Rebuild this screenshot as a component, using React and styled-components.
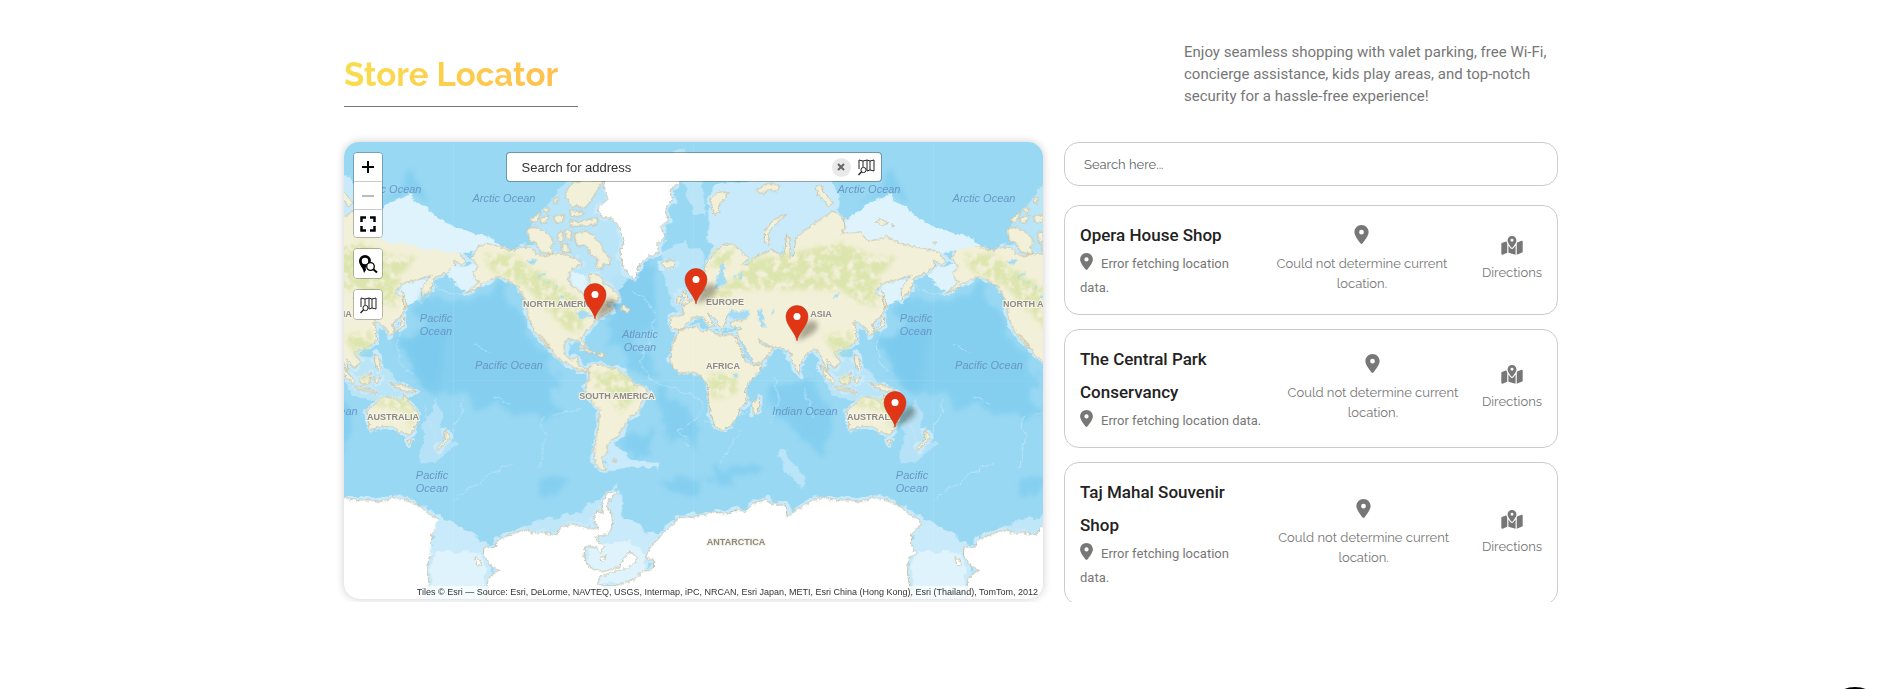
import styled, { createGlobalStyle } from 'styled-components';
import { FaLocationDot, FaMapLocationDot } from 'react-icons/fa6';

const stores = [
  { id: 1, name: 'Opera House Shop' },
  { id: 2, name: 'The Central Park Conservancy' },
  { id: 3, name: 'Taj Mahal Souvenir Shop' },
];

const pins = [
  { id: 'new-york', x: 251, y: 177 },
  { id: 'london', x: 352, y: 162 },
  { id: 'agra', x: 453, y: 199 },
  { id: 'sydney', x: 551, y: 285 },
];

const oceanLabels = [
  [46, 51, ['Arctic Ocean']],
  [160, 60, ['Arctic Ocean']],
  [525, 51, ['Arctic Ocean']],
  [640, 60, ['Arctic Ocean']],
  [92, 180, ['Pacific', 'Ocean']],
  [572, 180, ['Pacific', 'Ocean']],
  [165, 227, ['Pacific Ocean']],
  [645, 227, ['Pacific Ocean']],
  [296, 196, ['Atlantic', 'Ocean']],
  [461, 273, ['Indian Ocean']],
  [-19, 273, ['Indian Ocean']],
  [88, 337, ['Pacific', 'Ocean']],
  [568, 337, ['Pacific', 'Ocean']],
];

const landLabels = [
  [217, 165, 'NORTH AMERICA'],
  [697, 165, 'NORTH AMERICA'],
  [273, 257, 'SOUTH AMERICA'],
  [381, 163, 'EUROPE'],
  [-3, 175, 'ASIA'],
  [477, 175, 'ASIA'],
  [379, 227, 'AFRICA'],
  [49, 278, 'AUSTRALIA'],
  [529, 278, 'AUSTRALIA'],
  [392, 403, 'ANTARCTICA'],
];

const northAmerica =
  'M395 385L415 350L440 340L480 350L515 362L545 352L570 350L585 368L605 378L640 372L665 372L690 380L712 388L728 402L708 412L692 422L684 445L695 470L722 484L742 508L750 480L748 432L780 435L790 458L808 468L838 495L835 512L800 515L815 540L790 556L768 570L745 600L722 622L738 652L730 654L716 630L680 628L672 650L675 675L692 690L712 680L715 704L722 712L752 720L746 726L715 720L690 706L655 685L640 670L622 640L598 612L630 656L620 650L586 606L562 560L562 525L545 490L530 465L500 450L480 440L455 446L430 462L400 480L375 490L420 455L405 450L400 430L415 410Z';
const southAmerica =
  'M745 715L762 702L775 702L800 712L830 715L850 735L875 750L880 765L915 772L922 785L905 815L895 845L870 860L855 885L840 905L830 925L815 930L800 945L802 965L785 985L790 1005L797 1020L780 1018L765 1000L762 970L768 930L775 885L780 840L760 820L742 790L735 770L748 745Z';
const arcticIslands =
  'M562 296L585 290L606 300L630 318L642 340L630 352L640 372L600 366L590 340L570 335ZM572 268L600 246L596 265L580 280ZM600 262L628 256L618 278L602 280ZM640 206L655 205L650 222L642 220ZM612 232L628 236L622 248L612 244ZM640 258L672 255L668 276L648 280ZM652 312L668 302L670 330L658 340ZM662 345L684 340L690 366L668 368ZM674 300L696 306L694 330L680 326ZM704 310L735 303L760 316L780 340L792 366L812 388L806 408L790 400L786 420L765 408L775 388L750 372L740 346L718 350L705 338ZM690 272L720 275L770 262L772 284L720 288L692 290ZM676 200L682 176L700 158L740 148L790 150L772 180L752 214L730 236L712 226L698 232ZM690 240L730 246L725 260L692 258ZM846 524L870 540L862 546L842 540ZM715 655L742 656L772 670L765 674L735 662ZM775 668L798 676L785 682L772 678ZM818 988L830 990L822 996Z';
const greenland =
  'M805 130L860 112L960 108L1030 124L1015 160L990 180L995 210L975 240L985 270L962 290L975 320L950 345L958 368L925 380L900 400L892 425L885 446L868 436L850 410L840 370L852 330L836 290L815 265L785 262L772 235L806 206L790 165Z';
const eurasia =
  'M25 495L45 480L30 470L40 440L50 400L75 365L100 345L125 342L150 360L175 385L155 405L175 404L190 385L240 360L265 370L278 392L286 350L290 312L300 330L300 386L310 370L316 340L315 325L360 290L400 262L430 243L462 265L465 295L455 310L510 305L535 335L590 320L620 335L650 345L700 355L745 365L768 395L755 405L730 390L735 410L705 430L670 445L662 480L634 512L634 478L664 436L620 450L590 456L565 470L555 490L580 500L585 540L560 570L546 582L556 602L540 616L527 596L500 575L486 580L500 590L496 610L500 625L490 642L460 655L440 662L430 670L452 696L434 716L420 700L410 690L415 730L432 750L420 745L404 705L390 672L375 655L350 670L332 700L328 734L310 700L300 665L270 652L235 648L205 625L216 645L250 655L222 690L190 704L165 650L140 615L152 592L120 592L120 575L170 570L165 560L130 550L112 558L104 584L95 600L80 570L55 550L60 565L76 588L62 592L35 560L10 562L-12 584L-24 600L-58 595L-60 560L-20 556L-22 532L0 514Z';
const africa =
  'M-30 600L20 588L36 606L60 600L90 615L130 612L145 640L165 690L190 708L218 700L210 722L175 760L165 780L172 815L150 835L145 855L120 890L95 900L75 890L60 845L54 800L56 770L44 750L25 732L0 726L-30 730L-50 712L-58 690L-55 660L-50 635Z';
const easternIslands =
  'M210 802L204 845L190 855L188 820ZM470 840L500 820L520 800L555 805L572 820L582 794L598 820L625 850L622 880L600 915L570 905L550 890L510 890L480 900ZM590 930L606 932L598 946ZM705 898L722 922L706 938L684 962L680 954L704 928ZM535 756L556 766L575 762L620 785L600 788L560 775ZM445 748L466 742L482 728L480 760L456 766ZM388 700L410 726L434 752L432 762L408 744ZM436 768L500 785L498 790L440 776ZM490 745L512 742L500 762ZM494 672L504 680L514 714L506 722L494 696ZM574 560L584 562L582 590L560 600L548 606L556 596L572 584ZM576 486L582 490L590 530L582 526ZM270 258L288 254L256 286L236 306L238 346L222 334L224 304L244 276ZM58 206L86 186L116 188L108 204L86 222L90 246L72 252L66 228ZM196 180L236 160L270 166L262 184L236 180L222 192ZM378 170L392 164L404 190L430 220L416 230L396 206L384 196ZM554 274L576 266L594 280L578 286ZM602 282L614 284L606 290ZM728 338L738 336L734 344ZM-24 484L-14 484L0 520L-26 524L-16 508ZM-38 500L-26 500L-30 520L-40 518ZM-86 398L-62 390L-45 398L-52 414L-76 416Z';
const inlandWater =
  'M94 400L104 402L100 430L112 460L90 470L76 478L78 452L88 430ZM110 556L126 538L148 546L172 540L182 556L160 568L132 566ZM198 545L216 538L222 560L218 574L230 590L212 592L208 568ZM244 544L254 540L250 552ZM428 504L450 482L446 494L434 508ZM126 734L140 730L148 740L134 744ZM150 432L158 426L156 444L148 446ZM130 440L140 434L138 446ZM146 628L158 640L190 696L180 690L156 654Z';
const lakes =
  'M560 396L576 386L592 388L582 404ZM592 440L620 424L616 432L598 444ZM612 462L630 452L626 460ZM656 500L666 494L674 506ZM710 545L730 540L746 552L762 560L738 562L722 568ZM640 474L654 466L650 474Z';
const antarctica =
  'M440 1430L442 1356L456 1334L478 1322L450 1304L430 1276L432 1252L465 1250L470 1232L520 1210L560 1200L580 1210L606 1206L650 1216L660 1192L700 1182L740 1195L776 1195L760 1170L772 1140L790 1150L786 1120L800 1090L832 1082L804 1116L800 1130L815 1150L818 1190L800 1215L764 1220L790 1250L782 1268L764 1250L735 1250L732 1280L745 1310L790 1325L840 1310L846 1290L870 1264L888 1280L888 1296L862 1314L812 1328L780 1340L774 1356L782 1368L830 1368L880 1348L910 1325L940 1318L942 1292L916 1284L930 1254L960 1220L985 1194L1020 1162L1060 1160L1120 1148L1160 1150L1195 1140L1215 1145L1240 1120L1280 1108L1295 1122L1335 1125L1342 1160L1370 1140L1410 1115L1450 1102L1490 1110L1530 1110L1560 1115L1600 1103L1640 1110L1690 1135L1712 1155L1740 1170L1740 1185L1715 1210L1715 1250L1730 1270L1706 1284L1702 1330L1710 1370L1710 1430Z';

const SearchMapIcon = () => (
  <svg width='18' height='18' viewBox='0 0 18 18' fill='none' stroke='#222' strokeWidth='1'>
    <path d='M2 11V2l4 1 4-1 3 1 4-1v11l-4-1-3 1M6 3v6M10 2v11M13 3v9' />
    <circle cx='6.5' cy='12' r='2.6' fill='#fff' />
    <path d='M4.6 13.8L1.5 17' strokeWidth='1.4' />
  </svg>
);

const PinSearchIcon = () => (
  <svg width='20' height='20' viewBox='0 0 20 20'>
    <path
      fillRule='evenodd'
      d='M7 1a6 6 0 0 0-6 6c0 4 4 6.5 5 12l2-3A6 6 0 0 1 12 8.500L13 7a6 6 0 0 0-6-6zm0 2.800a3.200 3.200 0 1 1 0 6.400a3.200 3.200 0 0 1 0-6.400z'
    />
    <circle cx='12.5' cy='12.5' r='3.8' fill='#fff' stroke='#000' strokeWidth='1.3' />
    <path d='M15.300 15.300L19 18.500' stroke='#000' strokeWidth='2' />
  </svg>
);

const Pin = ({ x, y }) => (
  <g transform={`translate(${x} ${y})`}>
    <path d='M0 0L5-14Q14-24 20-18Q24-9 0 0Z' fill='#3d3728' opacity='.4' filter='url(#soft)' />
    <path
      d='M0 0C-1-8-11-15-11-24.500A10.800 10.800 0 0 1 11-24.500C11-15 1-8 0 0Z'
      fill='#e03616'
      stroke='#b92d12'
      strokeWidth='.5'
    />
    <circle cy='-24.5' r='3.5' fill='#fff' />
  </g>
);

const World = () => (
  <g id='world'>
    {/* deep basins */}
    <g filter='url(#basin)' fill='#78c9ee' opacity='.6'>
      <path d='M270 490L400 500L490 460L560 600L660 730L640 860L420 830L230 760L190 650Z' />
      <path d='M820 440L940 400L960 560L900 640L960 760L900 740L800 640L820 600Z' />
      <path d='M850 910L930 900L930 970L850 970ZM960 780L1050 860L1080 960L980 930Z' />
      <path d='M590 1040L680 1030L660 1090L600 1080ZM960 1060L1100 1030L1080 1100L980 1100Z' />
      <path d='M1290 760L1400 750L1480 860L1440 980L1330 880ZM1120 1010L1270 1020L1230 1060L1120 1060Z' />
      <path d='M1620 640L1740 600L1760 760L1680 760ZM1560 230L1640 190L1700 200L1650 120Z' />
    </g>
    <g filter='url(#blur)'>
      {/* continental shelves */}
      <g fill='none' stroke='#c9eafa' strokeWidth='16' strokeLinejoin='round'>
        <path d={northAmerica} />
        <path d={southAmerica} />
        <path d={greenland} />
        <path d={antarctica} />
        <g transform='translate(1050 0)'>
          <path d={eurasia} />
          <path d={africa} strokeWidth='10' />
          <path d={easternIslands} />
        </g>
      </g>
      <g fill='#c9eafa'>
        <path d='M560 300L680 150L840 130L880 420L800 560L700 500L600 400Z' opacity='.7' />
        <path d='M1100 330L1120 160L1280 150L1460 130L1500 200L1480 320L1320 360L1200 400Z' />
        <path d='M960 370L1040 330L1090 370L1080 500L1010 560L980 480ZM1000 60L1070 70L1100 260L1060 250L1030 150Z' opacity='.7' />
        <path d='M1430 700L1540 680L1640 770L1620 820L1480 800Z' opacity='.7' />
        <path d='M800 920L870 980L960 1005L960 1015L840 1012L800 1020Z' />
        <path d='M1690 890L1730 800L1750 900L1790 945L1720 1000L1680 1000Z' opacity='.6' />
        <path d='M300 1160L360 1190L440 1240L460 1440L260 1440L270 1250ZM830 1060L850 1160L940 1210L960 1220L900 1370L740 1370L730 1220Z' />
        <path d='M460 1240L560 1180L700 1150L780 1110L800 1220L660 1220Z' opacity='.8' />
        <path d='M1310 960L1340 960L1350 990L1400 1040L1390 1080L1340 1030Z' opacity='.7' />
      </g>
      <g fill='#def3fc'>
        <path d='M1480 300L1560 240L1640 200L1690 230L1740 270L1830 310L1920 345L1800 370L1720 360L1560 340Z' />
        <path d='M40 300L120 240L200 196L250 225L300 270L390 305L500 350L420 360L340 370L120 330Z' />
        <path d='M320 420L400 400L460 440L400 490L340 460ZM1640 450L1700 440L1690 500L1630 540L1600 500Z' />
        <path d='M280 1260L430 1270L440 1440L262 1440ZM740 1250L870 1230L920 1280L900 1360L760 1360Z' />
        <path d='M684 420L740 440L748 500L700 480Z' />
      </g>
      <g fill='none' stroke='#bfe6f8' strokeWidth='3' opacity='.8'>
        <path d='M270 450Q320 510 420 480M190 600Q150 680 220 740M880 480Q980 540 920 640T1010 780T1020 900L1050 950' />
        <path d='M1300 740Q1330 820 1290 880M600 1010Q620 900 610 850M340 1110Q420 1050 520 1000M250 830L300 960M370 815L340 910' />
        <path d='M400 640L450 670M640 850L720 845M460 800L520 830M1200 900L1140 1010M1390 780L1420 870M1090 880L1260 830' />
      </g>
    </g>

    <g filter='url(#coast)' stroke='#c8c3a8' strokeWidth='3' strokeLinejoin='round'>
      <g fill='#f3f0d9'>
        <path d={northAmerica} />
        <path d={southAmerica} />
        <path d={arcticIslands} />
        <g transform='translate(1050 0)'>
          <path d={eurasia} />
          <path d={africa} />
          <path d={easternIslands} />
        </g>
      </g>
      <g fill='#fff'>
        <path d={greenland} />
        <path d={antarctica} />
        <path d='M404 1284L418 1286L424 1304L412 1308ZM780 1288L798 1274L794 1286L784 1298Z' />
      </g>
    </g>

    <g filter='url(#vegetation)' fill='#dbe5ad'>
      <path d='M430 370L520 372L620 440L700 490L745 545L720 610L680 600L620 540L560 470L450 420Z' />
      <path d='M755 725L840 725L890 765L880 810L840 850L800 780L760 770Z' />
      <path d='M1230 390L1350 370L1500 335L1590 375L1670 380L1620 440L1610 530L1560 520L1500 480L1380 480L1200 480L1140 510L1080 520L1190 440Z' />
      <path d='M1120 360L1190 360L1160 410L1110 410ZM1450 620L1530 600L1540 640L1490 680ZM1100 730L1190 730L1190 790L1120 810Z' />
      <path d='M1540 812L1640 806L1664 850L1650 900L1630 840L1540 825ZM1490 740L1530 735L1520 760Z' />
    </g>
    <g filter='url(#coast)' fill='#a5dcf4'>
      <path d={lakes} />
      <path d={inlandWater} transform='translate(1050 0)' />
    </g>
    <path d='M340 36V1430M1060 36V1430M340 752H1780' stroke='#fff' strokeWidth='2' opacity='.15' />
  </g>
);

const WorldMap = () => (
  <MapCanvas viewBox='0 0 699 457' preserveAspectRatio='xMidYMid slice' role='img' aria-label='World map'>
    <defs>
      <filter id='soft' x='-50%' y='-50%' width='200%' height='200%'>
        <feGaussianBlur stdDeviation='2.4' />
      </filter>
      <filter id='basin' filterUnits='userSpaceOnUse' x='-100' y='-40' width='2100' height='1500'>
        <feTurbulence type='fractalNoise' baseFrequency='.015' numOctaves='4' seed='9' />
        <feDisplacementMap in='SourceGraphic' scale='90' xChannelSelector='R' yChannelSelector='G' />
        <feGaussianBlur stdDeviation='6' />
      </filter>
      <filter id='blur' filterUnits='userSpaceOnUse' x='-100' y='-40' width='2100' height='1500'>
        <feTurbulence type='fractalNoise' baseFrequency='.03' numOctaves='4' seed='4' />
        <feDisplacementMap in='SourceGraphic' scale='30' xChannelSelector='R' yChannelSelector='G' />
        <feGaussianBlur stdDeviation='2' />
      </filter>
      <filter id='coast' filterUnits='userSpaceOnUse' x='-100' y='0' width='2100' height='1500'>
        <feTurbulence type='fractalNoise' baseFrequency='.09' numOctaves='3' seed='7' />
        <feDisplacementMap in='SourceGraphic' scale='14' xChannelSelector='R' yChannelSelector='G' />
      </filter>
      <filter id='vegetation' filterUnits='userSpaceOnUse' x='-100' y='0' width='2100' height='1500'>
        <feTurbulence type='fractalNoise' baseFrequency='.04' numOctaves='5' seed='2' />
        <feColorMatrix values='0 0 0 0 0  0 0 0 0 0  0 0 0 0 0  4 0 0 0 -1.2' result='patches' />
        <feGaussianBlur in='SourceGraphic' stdDeviation='8' />
        <feComposite in2='patches' operator='in' />
      </filter>
    </defs>
    <rect width='699' height='457' fill='#98d8f3' />
    <g transform='scale(.33333) translate(-12 -36)'>
      <use href='#world' x='-1440' />
      <use href='#world' x='1440' />
      <World />
    </g>
    {oceanLabels.map(([x, y, lines]) => (
      <OceanLabel key={`${x}-${y}`}>
        {lines.map((line, i) => (
          <tspan key={line} x={x} y={y + i * 13}>
            {line}
          </tspan>
        ))}
      </OceanLabel>
    ))}
    {landLabels.map(([x, y, label]) => (
      <LandLabel key={`${label}-${x}`} x={x} y={y}>
        {label}
      </LandLabel>
    ))}
    {pins.map((pin) => (
      <Pin key={pin.id} x={pin.x} y={pin.y} />
    ))}
  </MapCanvas>
);

const StoreCard = ({ name }) => (
  <Card>
    <Info>
      <StoreName>{name}</StoreName>
      <Address>
        <FaLocationDot />
        Error fetching location data.
      </Address>
    </Info>
    <Distance>
      <FaLocationDot size={19} />
      <span>Could not determine current location.</span>
    </Distance>
    <Directions href='#directions'>
      <FaMapLocationDot />
      <span>Directions</span>
    </Directions>
  </Card>
);

const App = () => {
  return (
    <>
      <GlobalStyle />
      <Section>
        <Header>
          <Title>
            <span>Store Locator</span>
          </Title>
          <Intro>
            Enjoy seamless shopping with valet parking, free Wi-Fi, concierge assistance, kids play areas, and
            top-notch security for a hassle-free experience!
          </Intro>
        </Header>

        <Content>
          <MapPanel>
            <WorldMap />
            <Controls>
              <ControlGroup>
                <ControlButton type='button' aria-label='Zoom in'>
                  <svg width='12' height='12' viewBox='0 0 12 12'>
                    <path d='M6 0v12M0 6h12' stroke='#000' strokeWidth='2' />
                  </svg>
                </ControlButton>
                <ControlButton type='button' aria-label='Zoom out' disabled>
                  <svg width='12' height='12' viewBox='0 0 12 12'>
                    <path d='M0 6h12' stroke='#bbb' strokeWidth='2' />
                  </svg>
                </ControlButton>
                <ControlButton type='button' aria-label='Full screen'>
                  <svg width='16' height='16' viewBox='0 0 16 16'>
                    <path
                      d='M1.500 6V1.500H6M10 1.500h4.500V6M14.500 10v4.500H10M6 14.500H1.500V10'
                      fill='none'
                      stroke='#000'
                      strokeWidth='2.5'
                    />
                  </svg>
                </ControlButton>
              </ControlGroup>
              <ControlGroup>
                <ControlButton type='button' aria-label='Find a place'>
                  <PinSearchIcon />
                </ControlButton>
              </ControlGroup>
              <ControlGroup>
                <ControlButton type='button' aria-label='Search the map'>
                  <SearchMapIcon />
                </ControlButton>
              </ControlGroup>
            </Controls>
            <AddressSearch>
              <input type='text' placeholder='Search for address' aria-label='Search for address' />
              <ClearButton type='button' aria-label='Clear'>
                <svg width='8' height='8' viewBox='0 0 8 8'>
                  <path d='M1 1l6 6M7 1L1 7' stroke='#666' strokeWidth='2' />
                </svg>
              </ClearButton>
              <IconButton type='button' aria-label='Search'>
                <SearchMapIcon />
              </IconButton>
            </AddressSearch>
            <Attribution>
              Tiles © Esri — Source: Esri, DeLorme, NAVTEQ, USGS, Intermap, iPC, NRCAN, Esri Japan, METI, Esri China
              (Hong Kong), Esri (Thailand), TomTom, 2012
            </Attribution>
          </MapPanel>

          <Sidebar>
            <SearchInput type='text' placeholder='Search here...' aria-label='Search stores' />
            <StoreList>
              {stores.map((store) => (
                <StoreCard key={store.id} name={store.name} />
              ))}
            </StoreList>
          </Sidebar>
        </Content>
      </Section>
      <FloatingButton type='button' aria-label='Back to top' />
    </>
  );
};

export default App;

const GlobalStyle = createGlobalStyle`
  * {
    box-sizing: border-box;
  }

  body {
    margin: 0;
    background: #fff;
    color: #777;
    font-family: Roboto, sans-serif;
  }

  button {
    padding: 0;
    border: 0;
    cursor: pointer;
  }
`;

const Section = styled.section`
  max-width: 1214px;
  margin: 0 auto;
  padding-top: 41px;
`;

const Header = styled.header`
  display: flex;
  justify-content: space-between;
  align-items: flex-start;
  margin-bottom: 35px;
`;

const Title = styled.h2`
  width: 234px;
  margin: 13px 0 0;
  padding-bottom: 10px;
  border-bottom: 1px solid #777;
  font: 700 33px/42px Raleway, Lato, sans-serif;
  white-space: nowrap;

  span {
    display: block;
    background: linear-gradient(90deg, #f9dd4e, #ffc04f 90%);
    background-clip: text;
    -webkit-background-clip: text;
    color: transparent;
  }
`;

const Intro = styled.p`
  width: 374px;
  margin: 0;
  font-size: 15px;
  line-height: 22px;
`;

const Content = styled.div`
  display: grid;
  grid-template-columns: 699fr 494fr;
  gap: 21px;
`;

const MapPanel = styled.div`
  position: relative;
  height: 457px;
  overflow: hidden;
  border-radius: 15px;
  box-shadow: 0 0 8px rgba(0, 0, 0, 0.2);
  font-family: 'Liberation Sans', Arial, sans-serif;
`;

const MapCanvas = styled.svg`
  display: block;
  width: 100%;
  height: 100%;
`;

const OceanLabel = styled.text`
  fill: #6a98c6;
  font-size: 11px;
  font-style: italic;
  text-anchor: middle;
`;

const LandLabel = styled.text`
  fill: #8d8b84;
  stroke: #f6f4e6;
  stroke-width: 2px;
  paint-order: stroke;
  font-size: 9px;
  font-weight: 700;
  text-anchor: middle;
`;

const Controls = styled.div`
  position: absolute;
  top: 10px;
  left: 9px;
  display: flex;
  flex-direction: column;
  gap: 10px;
`;

const ControlGroup = styled.div`
  display: flex;
  flex-direction: column;
  width: 30px;
  overflow: hidden;
  border: 1px solid rgba(0, 0, 0, 0.25);
  border-radius: 4px;
  background-clip: padding-box;
`;

const ControlButton = styled.button`
  display: flex;
  align-items: center;
  justify-content: center;
  height: 28px;
  background: #fff;

  & + & {
    border-top: 1px solid #ccc;
  }

  &:only-child {
    height: 29px;
  }
`;

const AddressSearch = styled.div`
  position: absolute;
  top: 10px;
  left: 50%;
  display: flex;
  align-items: center;
  gap: 6px;
  width: 376px;
  height: 30px;
  margin-left: -188px;
  padding: 0 6px 0 15px;
  border: 1px solid rgba(0, 0, 0, 0.3);
  border-radius: 4px;
  background: #fff;
  background-clip: padding-box;

  input {
    flex: 1;
    min-width: 0;
    padding: 0;
    border: 0;
    outline: 0;
    font: 13px 'Liberation Sans', Arial, sans-serif;
  }

  input::placeholder {
    color: #333;
  }
`;

const IconButton = styled.button`
  display: flex;
  background: none;
`;

const ClearButton = styled(IconButton)`
  align-items: center;
  justify-content: center;
  width: 19px;
  height: 19px;
  border-radius: 50%;
  background: #e9e9e9;
`;

const Attribution = styled.div`
  position: absolute;
  right: 0;
  bottom: 0;
  padding: 0 5px;
  background: rgba(255, 255, 255, 0.7);
  color: #333;
  font-size: 9px;
  line-height: 13px;
  white-space: nowrap;
`;

const Sidebar = styled.div`
  display: flex;
  flex-direction: column;
  gap: 19px;
`;

const SearchInput = styled.input`
  height: 44px;
  padding: 0 19px;
  border: 1px solid #ccc;
  border-radius: 15px;
  font: 13px Raleway, Lato, sans-serif;

  &::placeholder {
    color: #666;
  }
`;

const StoreList = styled.ul`
  display: flex;
  flex-direction: column;
  gap: 14px;
  height: 397px;
  margin: 0;
  padding: 0;
  overflow: hidden;
  list-style: none;
`;

const Card = styled.li`
  display: flex;
  flex-shrink: 0;
  align-items: center;
  gap: 10px;
  padding: 13px 15px 14px;
  border: 1px solid #ccc;
  border-radius: 15px;
`;

const Info = styled.div`
  min-width: 0;
`;

const StoreName = styled.h3`
  margin: 0;
  color: #222;
  font-size: 17px;
  font-weight: 500;
  line-height: 33px;
`;

const Address = styled.p`
  margin: 0;
  font-size: 13px;
  line-height: 24px;

  svg {
    width: 13px;
    height: 17px;
    margin-right: 8px;
    vertical-align: -2px;
  }
`;

const Distance = styled.div`
  display: flex;
  flex-direction: column;
  align-items: center;
  gap: 10px;
  font: 13px/20px Raleway, Lato, sans-serif;
  text-align: center;
`;

const Directions = styled.a`
  display: flex;
  flex-direction: column;
  flex-shrink: 0;
  align-items: center;
  gap: 8px;
  margin-left: auto;
  padding-left: 6px;
  color: #777;
  font: 13px/20px Raleway, Lato, sans-serif;
  text-decoration: none;

  svg {
    width: 22px;
    height: 19px;
  }
`;

const FloatingButton = styled.button`
  position: fixed;
  right: 17px;
  bottom: -58px;
  width: 60px;
  height: 60px;
  border-radius: 50%;
  background: #000;
`;
